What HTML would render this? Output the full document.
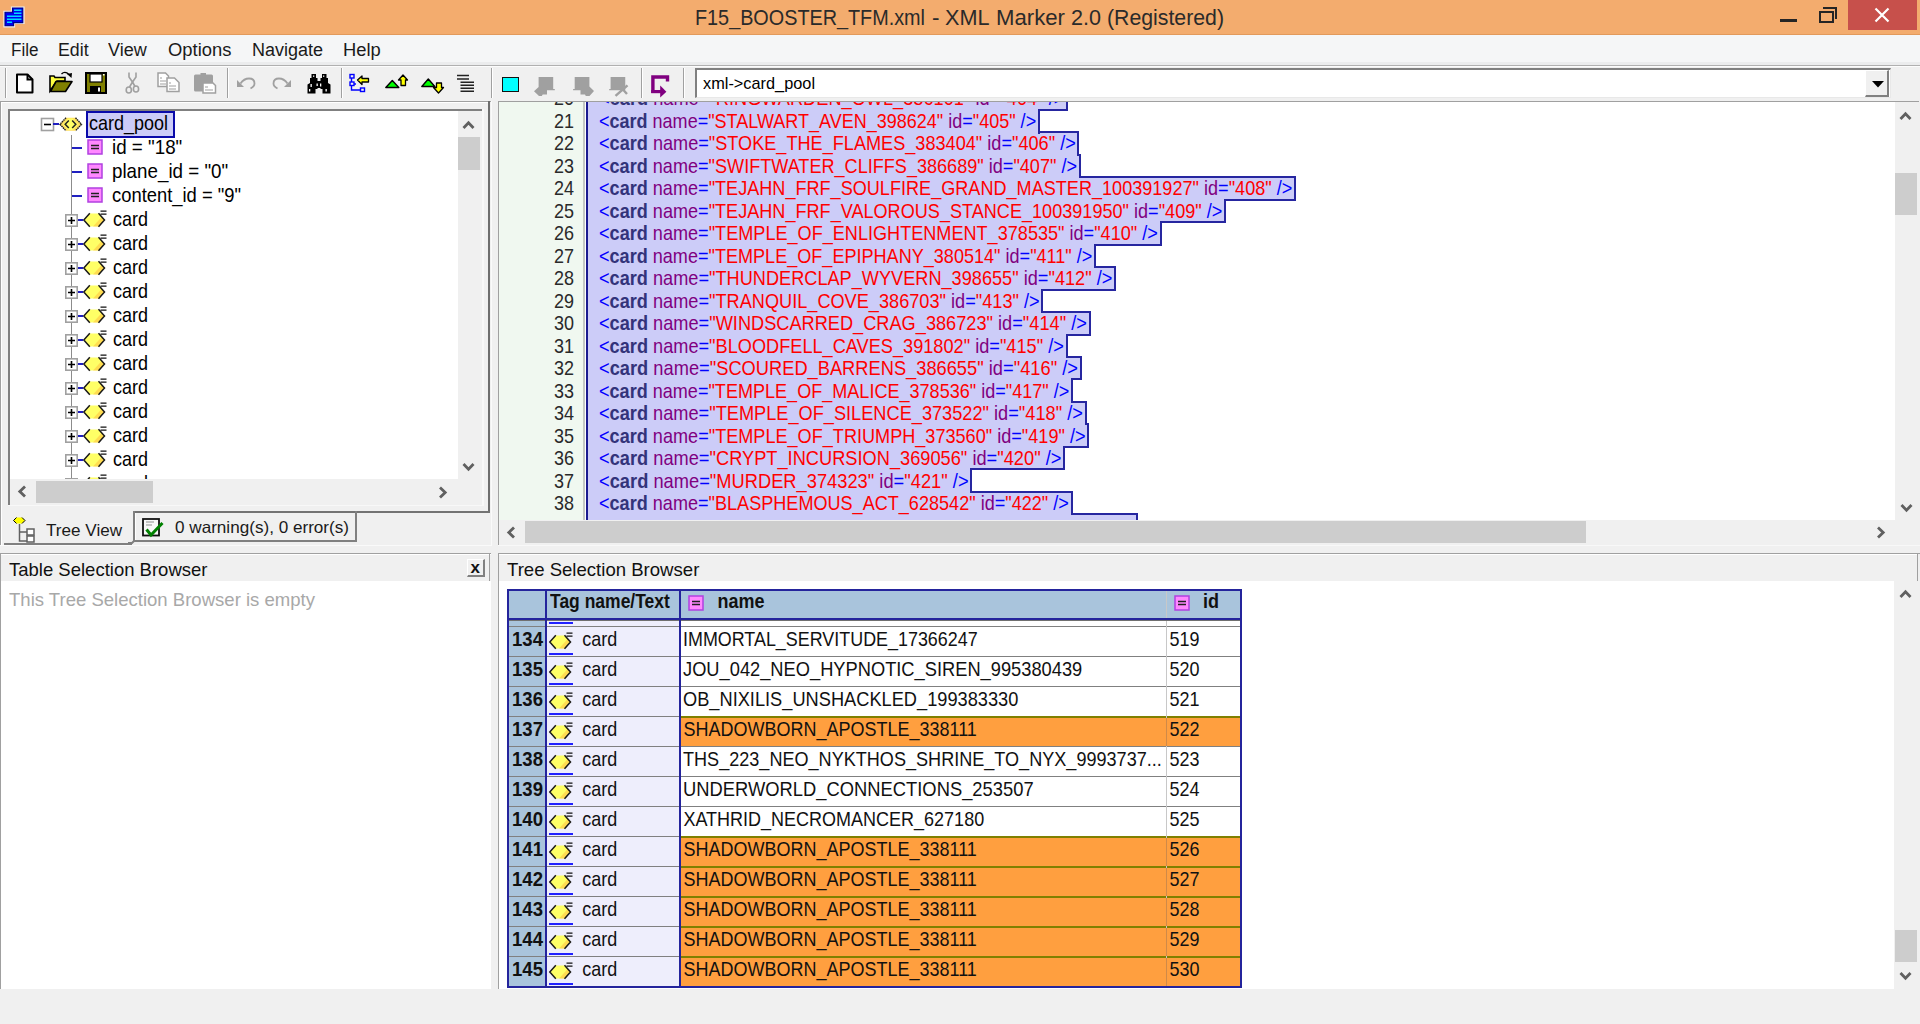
<!DOCTYPE html><html><head><meta charset="utf-8"><title>XML Marker</title><style>
*{margin:0;padding:0;box-sizing:border-box}
html,body{width:1920px;height:1024px;overflow:hidden;background:#F0F0F0;font-family:"Liberation Sans", sans-serif;}
.a{position:absolute}
.t{position:absolute;white-space:pre;line-height:1}
svg{position:absolute;overflow:visible}
</style></head><body>
<div class="a" style="left:0px;top:0px;width:1920px;height:34px;background:#F3AC6E;"></div>
<div class="a" style="left:0px;top:34px;width:1920px;height:1px;background:#E29A5C;"></div>
<svg style="left:0;top:0" width="30" height="30" viewBox="0 0 30 30"><path d="M12 7.5 H23.5 V23 H14 V26.5 H4.5 V11.8 H12 Z" fill="#0000E8" stroke="#F0F0F0" stroke-width="2.2" stroke-linejoin="miter"/><path d="M12.5 8 H22.8 V22.6 H13.6 V25.8 H5 V12.3 H12.5 Z" fill="#0000F0" stroke="#000080" stroke-width="1.1"/><g stroke="#00DCFF" stroke-width="1.6"><path d="M14 10.3 H21.4 M14 13.2 H21.4 M7 16.2 H21.4 M7 19.2 H21.4 M7 22.2 H12"/></g></svg>
<div class="t" style="left:695.00px;top:7.18px;font-size:22px;color:#2A2A2A;transform:scale(0.9003,1.0000);transform-origin:0 18.62px;">F15_BOOSTER_TFM.xml</div>
<div class="t" style="left:932.00px;top:7.18px;font-size:22px;color:#2A2A2A;transform:scale(1.0237,1.0000);transform-origin:0 18.62px;">-</div>
<div class="t" style="left:945.00px;top:7.18px;font-size:22px;color:#2A2A2A;transform:scale(0.9837,1.0000);transform-origin:0 18.62px;">XML</div>
<div class="t" style="left:996.00px;top:7.18px;font-size:22px;color:#2A2A2A;transform:scale(1.0080,1.0000);transform-origin:0 18.62px;">Marker</div>
<div class="t" style="left:1071.00px;top:7.18px;font-size:22px;color:#2A2A2A;transform:scale(0.9809,1.0000);transform-origin:0 18.62px;">2.0</div>
<div class="t" style="left:1106.50px;top:7.18px;font-size:22px;color:#2A2A2A;transform:scale(0.9666,1.0000);transform-origin:0 18.62px;">(Registered)</div>
<div class="a" style="left:1780px;top:19px;width:17px;height:3px;background:#252525;"></div>
<div class="a" style="left:1819px;top:11px;width:15px;height:12px;border:2px solid #252525"></div>
<div class="a" style="left:1823px;top:7px;width:14px;height:12px;border-top:2px solid #252525;border-right:2px solid #252525"></div>
<div class="a" style="left:1848px;top:0px;width:69px;height:30px;background:#C7504B;"></div>
<svg style="left:1874px;top:8px" width="16" height="14" viewBox="0 0 16 14"><path d="M1.5 0.5 L14.5 13.5 M14.5 0.5 L1.5 13.5" stroke="#fff" stroke-width="2.2"/></svg>
<div class="a" style="left:0px;top:35px;width:1920px;height:30px;background:#F5F6F7;"></div>
<div class="a" style="left:0px;top:62px;width:1920px;height:3px;background:#EBECED;"></div>
<div class="t" style="left:10.50px;top:40.56px;font-size:18px;color:#1A1A1A;transform:scale(0.9481,1.0000);transform-origin:0 15.24px;">File</div>
<div class="t" style="left:58.40px;top:40.56px;font-size:18px;color:#1A1A1A;transform:scale(0.9866,1.0000);transform-origin:0 15.24px;">Edit</div>
<div class="t" style="left:108.40px;top:40.56px;font-size:18px;color:#1A1A1A;transform:scale(1.0022,1.0000);transform-origin:0 15.24px;">View</div>
<div class="t" style="left:167.75px;top:40.56px;font-size:18px;color:#1A1A1A;transform:scale(1.0212,1.0000);transform-origin:0 15.24px;">Options</div>
<div class="t" style="left:252.00px;top:40.56px;font-size:18px;color:#1A1A1A;">Navigate</div>
<div class="t" style="left:342.75px;top:40.56px;font-size:18px;color:#1A1A1A;transform:scale(1.0197,1.0000);transform-origin:0 15.24px;">Help</div>
<div class="a" style="left:0px;top:65px;width:1920px;height:36px;background:#F0F0F0;"></div>
<div class="a" style="left:0px;top:65px;width:1920px;height:1px;background:#B0B0B0;"></div>
<div class="a" style="left:0px;top:66px;width:1920px;height:1px;background:#FCFCFC;"></div>
<div class="a" style="left:0px;top:100px;width:1920px;height:1px;background:#F0F0F0;"></div>
<div class="a" style="left:5px;top:68px;width:1px;height:30px;background:#A0A0A0;"></div>
<div class="a" style="left:6px;top:68px;width:1px;height:30px;background:#FFFFFF;"></div>
<div class="a" style="left:227px;top:68px;width:1px;height:30px;background:#A0A0A0;"></div>
<div class="a" style="left:228px;top:68px;width:1px;height:30px;background:#FFFFFF;"></div>
<div class="a" style="left:341px;top:68px;width:1px;height:30px;background:#A0A0A0;"></div>
<div class="a" style="left:342px;top:68px;width:1px;height:30px;background:#FFFFFF;"></div>
<div class="a" style="left:491px;top:68px;width:1px;height:30px;background:#A0A0A0;"></div>
<div class="a" style="left:492px;top:68px;width:1px;height:30px;background:#FFFFFF;"></div>
<div class="a" style="left:641px;top:68px;width:1px;height:30px;background:#A0A0A0;"></div>
<div class="a" style="left:642px;top:68px;width:1px;height:30px;background:#FFFFFF;"></div>
<div class="a" style="left:683px;top:68px;width:1px;height:30px;background:#A0A0A0;"></div>
<div class="a" style="left:684px;top:68px;width:1px;height:30px;background:#FFFFFF;"></div>
<svg style="left:16px;top:73px" width="18" height="21" viewBox="0 0 18 21"><path d="M1 1.5 H11.5 L16.5 6.5 V19.5 H1 Z" fill="#fff" stroke="#000" stroke-width="2" stroke-linejoin="round"/><path d="M11.5 1.5 V6.5 H16.5" fill="none" stroke="#000" stroke-width="2"/></svg>
<svg style="left:49px;top:71px" width="24" height="22" viewBox="0 0 24 22"><path d="M1 5 H5 L6 6.5 H16 V10 H8 L1 20 Z" fill="#FFFF40" stroke="#000" stroke-width="1.6"/><path d="M1.5 20.5 L7 10.5 H23 L16.5 20.5 Z" fill="#808000" stroke="#000" stroke-width="1.6" stroke-linejoin="round"/><path d="M12.5 3 Q16 -0.5 20 3.5" fill="none" stroke="#000" stroke-width="1.4"/><path d="M18 3 L23 2 L22.5 7 Z" fill="#000"/></svg>
<svg style="left:85px;top:72px" width="22" height="22" viewBox="0 0 22 22"><rect x="1" y="1" width="20" height="20" fill="#808000" stroke="#000" stroke-width="2"/><rect x="5" y="2" width="12" height="8" fill="#fff" stroke="#000" stroke-width="1.2"/><rect x="5" y="14" width="11" height="7" fill="#000"/><rect x="13" y="15.5" width="2" height="4" fill="#fff"/><rect x="18" y="2" width="1.5" height="1.5" fill="#fff"/></svg>
<svg style="left:125px;top:72px" width="16" height="22" viewBox="0 0 16 22"><path d="M4 0.5 V5 L7.5 10 L11 5 V0.5" fill="none" stroke="#A0A0A0" stroke-width="1.6"/><path d="M7.5 10 L4.5 15 M7.5 10 L10 14.5" fill="none" stroke="#A0A0A0" stroke-width="1.6"/><ellipse cx="3.8" cy="18" rx="2.6" ry="3" fill="none" stroke="#A0A0A0" stroke-width="1.6"/><ellipse cx="11" cy="17" rx="2.6" ry="3" fill="none" stroke="#A0A0A0" stroke-width="1.6"/></svg>
<svg style="left:157px;top:72px" width="24" height="21" viewBox="0 0 24 21"><path d="M1 1 H8.5 L11.5 4 V14.5 H1 Z" fill="#fff" stroke="#A0A0A0" stroke-width="1.5"/><path d="M3 6 H5 M3 9 H9 M3 12 H9" stroke="#A0A0A0" stroke-width="1.2"/><path d="M10 6 H17.5 L22 10.5 V19.5 H10 Z" fill="#fff" stroke="#A0A0A0" stroke-width="1.5"/><path d="M12 11 H14 M12 14 H19 M12 17 H19" stroke="#A0A0A0" stroke-width="1.2"/></svg>
<svg style="left:193px;top:72px" width="24" height="22" viewBox="0 0 24 22"><path d="M1 4 Q1 2.5 2.5 2.5 H7.5 V1 H13 V2.5 H18.5 Q20 2.5 20 4 V18 Q20 19.5 18.5 19.5 H2.5 Q1 19.5 1 18 Z" fill="#A0A0A0"/><path d="M10 11 H20 L22.5 13.5 V21 H10 Z" fill="#fff" stroke="#A0A0A0" stroke-width="1.5"/><path d="M12 15 H15 M12 18 H20" stroke="#A0A0A0" stroke-width="1.2"/></svg>
<svg style="left:236px;top:77px" width="20" height="13" viewBox="0 0 20 13"><path d="M1 3 V10 H8 Z" fill="#A0A0A0"/><path d="M4.5 6.5 Q8 1.5 13 1.5 Q18.5 1.5 18.5 6.5 Q18.5 9.5 14.5 11.5" fill="none" stroke="#A0A0A0" stroke-width="1.8"/></svg>
<svg style="left:272px;top:77px" width="20" height="13" viewBox="0 0 20 13"><path d="M19 3 V10 H12 Z" fill="#A0A0A0"/><path d="M15.5 6.5 Q12 1.5 7 1.5 Q1.5 1.5 1.5 6.5 Q1.5 9.5 5.5 11.5" fill="none" stroke="#A0A0A0" stroke-width="1.8"/></svg>
<svg style="left:307px;top:74px" width="24" height="20" viewBox="0 0 24 20"><path d="M4.5 0 H9 V4 H10.5 V7 H13.5 V4 H15 V0 H19.5 V4 H21 V9 L23.5 10.5 V19.5 H15.5 V15 H13.5 V14 H10.5 V15 H8.5 V19.5 H0.5 V10.5 L3 9 V4 H4.5 Z" fill="#000"/><rect x="6" y="1.5" width="1.3" height="1.3" fill="#fff"/><rect x="16" y="1.5" width="1.3" height="1.3" fill="#fff"/><rect x="3.5" y="10" width="1.3" height="3" fill="#fff"/><rect x="9.5" y="9.5" width="1.3" height="2.5" fill="#fff"/><rect x="13" y="9.5" width="1.3" height="3" fill="#fff"/><rect x="2" y="15" width="1.3" height="2.5" fill="#fff"/><rect x="18.5" y="15" width="1.3" height="2.5" fill="#fff"/></svg>
<svg style="left:348px;top:73px" width="23" height="20" viewBox="0 0 23 20"><g fill="none" stroke="#0000FF" stroke-width="1.4"><rect x="2" y="1.5" width="4" height="3.5"/><rect x="2" y="9" width="4" height="3.5"/><rect x="12.5" y="15" width="4" height="3.5"/><path d="M3.5 5 V9 M3.5 12.5 V17 H12.5 M6 11 H8"/></g><path d="M9.5 7 L14 3 V5.5 H20.5 V9 H14 V11.5 Z" fill="#FFFF00" stroke="#000" stroke-width="1.3" stroke-linejoin="round"/></svg>
<svg style="left:385px;top:74px" width="25" height="15" viewBox="0 0 25 15"><path d="M0.8 13.5 L7.3 6.5 L13.8 13.5 Z" fill="#00FF00" stroke="#000" stroke-width="1.4" stroke-linejoin="round"/><path d="M18 1 L22.5 6 H20.5 V11.5 H16 V6 H13.5 Z" fill="#FFFF00" stroke="#000" stroke-width="1.3" stroke-linejoin="round"/></svg>
<svg style="left:421px;top:77px" width="25" height="17" viewBox="0 0 25 17"><path d="M0.8 9.5 L7.3 2 L13.8 9.5 Z" fill="#00FF00" stroke="#000" stroke-width="1.4" stroke-linejoin="round"/><path d="M17.5 16 L22.5 10.5 H20.5 V6 H15.5 V10.5 H12.5 Z" fill="#FFFF00" stroke="#000" stroke-width="1.3" stroke-linejoin="round"/></svg>
<svg style="left:456px;top:74px" width="19" height="19" viewBox="0 0 19 19"><g stroke="#222" stroke-width="1.6"><path d="M1 1.5 H13 M1 5 H13 M4.5 8.2 H18 M4.5 11.2 H18 M4.5 14.2 H18 M4.5 17.2 H18"/></g></svg>
<div class="a" style="left:502px;top:77px;width:17px;height:15px;background:#00FFFF;border:1.5px solid #111"></div>
<svg style="left:534px;top:77px" width="22" height="20" viewBox="0 0 22 20"><path d="M4.6 0 H19.2 V12.1 H20.8 V13.2 H13 V17.6 H8.7 L7.8 19 H5 L0 14.3 L4.6 9.9 Z" fill="#A0A0A0"/></svg>
<svg style="left:573px;top:77px" width="22" height="20" viewBox="0 0 22 20"><path d="M1.7 0 H16.4 V9.5 L21 14 L16.5 19 H12.8 L12 17.6 H7.5 V13.2 H0.1 V12.1 H1.7 Z" fill="#A0A0A0"/></svg>
<svg style="left:609px;top:77px" width="22" height="20" viewBox="0 0 22 20"><path d="M1.6 0 H16.25 V13.2 H0.2 V12 H1.6 Z" fill="#A0A0A0"/><path d="M6.5 18.8 L18.5 8.3 M13.5 12 L18 17" stroke="#A0A0A0" stroke-width="2.4"/></svg>
<svg style="left:650px;top:74px" width="22" height="24" viewBox="0 0 22 24"><path d="M2.9 19 V3 H17.5 V7.5" fill="none" stroke="#800080" stroke-width="3.4" stroke-linejoin="miter"/><path d="M1.2 17.6 H12" stroke="#800080" stroke-width="3.2"/><path d="M10.2 11.5 L16.4 17.7 L10.2 23.5 Z" fill="#800080"/></svg>
<div class="a" style="left:695px;top:68px;width:1196px;height:30px;background:#fff;border-top:2px solid #808080;border-left:2px solid #808080;border-right:1px solid #E8E8E8;border-bottom:1px solid #E8E8E8"></div>
<div class="a" style="left:1865px;top:70px;width:24px;height:27px;background:#F0F0F0;border-right:2px solid #808080;border-bottom:2px solid #808080;border-top:1px solid #fff;border-left:1px solid #fff"></div>
<svg style="left:1871.5px;top:81px" width="12" height="7" viewBox="0 0 12 7"><path d="M0 0 H12 L6 6.5 Z" fill="#000"/></svg>
<div class="t" style="left:703.00px;top:75.21px;font-size:17px;color:#000;transform:scale(0.9598,1.0000);transform-origin:0 14.39px;">xml-&gt;card_pool</div>
<div class="a" style="left:0px;top:101px;width:491px;height:1px;background:#A0A0A0;"></div>
<div class="a" style="left:0px;top:101px;width:1px;height:444px;background:#A0A0A0;"></div>
<div class="a" style="left:1px;top:102px;width:489px;height:1px;background:#FFFFFF;"></div>
<div class="a" style="left:1px;top:102px;width:1px;height:443px;background:#FFFFFF;"></div>
<div class="a" style="left:488px;top:101px;width:2px;height:412px;background:#6E6E6E;"></div>
<div class="a" style="left:8px;top:109px;width:476px;height:2px;background:#808080;"></div>
<div class="a" style="left:8px;top:109px;width:2px;height:397px;background:#808080;"></div>
<div class="a" style="left:10px;top:111px;width:472px;height:394px;background:#FFFFFF;"></div>
<div class="a" style="left:482px;top:109px;width:2px;height:397px;background:#F8F8F8;"></div>
<div class="a" style="left:8px;top:505px;width:476px;height:1px;background:#F8F8F8;"></div>
<div class="a" style="left:458px;top:111px;width:24px;height:369px;background:#F0F0F0;"></div>
<div class="a" style="left:458px;top:137px;width:22px;height:33px;background:#CDCDCD;"></div>
<svg style="left:461.2px;top:117.5px" width="15" height="15" viewBox="0 0 15 15"><path d="M2.5 10 L7.5 4.8 L12.5 10" fill="none" stroke="#606060" stroke-width="2.8" stroke-linejoin="miter"/></svg>
<svg style="left:461.2px;top:458.5px" width="15" height="15" viewBox="0 0 15 15"><path d="M2.5 5 L7.5 10.2 L12.5 5" fill="none" stroke="#606060" stroke-width="2.8" stroke-linejoin="miter"/></svg>
<div class="a" style="left:10px;top:479px;width:472px;height:26px;background:#F0F0F0;"></div>
<div class="a" style="left:36px;top:481px;width:117px;height:22px;background:#CDCDCD;"></div>
<svg style="left:15.0px;top:484.0px" width="15" height="15" viewBox="0 0 15 15"><path d="M10 2.5 L4.8 7.5 L10 12.5" fill="none" stroke="#606060" stroke-width="2.8" stroke-linejoin="miter"/></svg>
<svg style="left:435.2px;top:484.5px" width="15" height="15" viewBox="0 0 15 15"><path d="M5 2.5 L10.2 7.5 L5 12.5" fill="none" stroke="#606060" stroke-width="2.8" stroke-linejoin="miter"/></svg>
<div class="a" style="left:458px;top:481px;width:24px;height:24px;background:#F0F0F0;"></div>
<div class="a" style="left:10px;top:111px;width:448px;height:368px;overflow:hidden">
<svg style="left:31px;top:7px" width="14" height="14" viewBox="0 0 14 14"><rect x="0.5" y="0.5" width="12" height="12" fill="#fff" stroke="#A0A0A0" stroke-width="1.6"/><path d="M3 6.5 H10" stroke="#000" stroke-width="1.6"/></svg>
<div class="a" style="left:43px;top:12px;width:6px;height:2px;background:#2020C0;"></div>
<svg style="left:49px;top:5px" width="24" height="16" viewBox="0 0 24 16"><path d="M1 8.3 L7 1.8 H16.5 L22.5 8.3 L16.5 14.8 H7 Z" fill="#FFE060"/><path d="M9.5 2.5 L4 8.3 L9.5 14 H13.5 L19 8.3 L13.5 2.5 Z" fill="#FFFF66"/><path d="M7 1.8 L1 8.3 L7 14.8 M16.5 1.8 L22.5 8.3 L16.5 14.8" fill="none" stroke="#222" stroke-width="1.4" stroke-dasharray="1.6 0.6"/><path d="M9.8 4.5 L6.2 8.3 L9.8 12.1 M13.2 4.5 L16.8 8.3 L13.2 12.1" fill="none" stroke="#222" stroke-width="1.5"/></svg>
<div class="a" style="left:76px;top:0px;width:89px;height:27px;background:#CCCCF8;"></div>
<div class="a" style="left:76px;top:0px;width:89px;height:27px;border:2px solid #0A0AAA"></div>
<div class="t" style="left:79.00px;top:3.96px;font-size:18px;color:#000;transform:scale(1.0000,1.1000);transform-origin:0 15.24px;">card_pool</div>
<div class="a" style="left:61px;top:24px;width:1px;height:346px;background:#8C8C8C;"></div>
<div class="a" style="left:62px;top:36px;width:10px;height:2px;background:#2020C0;"></div>
<svg style="left:77px;top:28px" width="16" height="16" viewBox="0 0 16 16"><rect x="1" y="1" width="14" height="14" fill="#FF88FF" stroke="#B040E0" stroke-width="1.5"/><path d="M4 6.5 H12 M4 9.5 H12" stroke="#222" stroke-width="1.5"/></svg>
<div class="t" style="left:101.60px;top:28.16px;font-size:18px;color:#000;transform:scale(1.0440,1.1000);transform-origin:0 15.24px;">id = "18"</div>
<div class="a" style="left:62px;top:60px;width:10px;height:2px;background:#2020C0;"></div>
<svg style="left:77px;top:52px" width="16" height="16" viewBox="0 0 16 16"><rect x="1" y="1" width="14" height="14" fill="#FF88FF" stroke="#B040E0" stroke-width="1.5"/><path d="M4 6.5 H12 M4 9.5 H12" stroke="#222" stroke-width="1.5"/></svg>
<div class="t" style="left:102.00px;top:52.16px;font-size:18px;color:#000;transform:scale(1.0430,1.1000);transform-origin:0 15.24px;">plane_id = "0"</div>
<div class="a" style="left:62px;top:84px;width:10px;height:2px;background:#2020C0;"></div>
<svg style="left:77px;top:76px" width="16" height="16" viewBox="0 0 16 16"><rect x="1" y="1" width="14" height="14" fill="#FF88FF" stroke="#B040E0" stroke-width="1.5"/><path d="M4 6.5 H12 M4 9.5 H12" stroke="#222" stroke-width="1.5"/></svg>
<div class="t" style="left:102.40px;top:76.16px;font-size:18px;color:#000;transform:scale(1.0210,1.1000);transform-origin:0 15.24px;">content_id = "9"</div>
<svg style="left:55px;top:103px" width="13" height="13" viewBox="0 0 13 13"><rect x="0.8" y="0.8" width="11.4" height="11.4" fill="#fff" stroke="#A0A0A0" stroke-width="1.6"/><path d="M3 6.5 H10 M6.5 3 V10" stroke="#000" stroke-width="1.6"/></svg>
<div class="a" style="left:68px;top:108px;width:5px;height:2px;background:#2020C0;"></div>
<svg style="left:73.20px;top:98.10px" width="24" height="20" viewBox="0 0 24 20"><path d="M0.6 11 L6.5 4.5 H15.8 L21.8 11 L15.8 17.5 H6.5 Z" fill="#FFFF66"/><path d="M10 17.5 L15.5 11.5 L19 7.7 L21.8 11 L15.8 17.5 Z" fill="#FFC040" opacity="0.55"/><path d="M6.8 4.3 L0.8 11 L6.8 17.7 M15.5 4.3 L21.5 11 L15.5 17.7" fill="none" stroke="#1A1A1A" stroke-width="1.5"/><path d="M17.5 2.1 H23.5 M17.5 5.1 H23.5" stroke="#111" stroke-width="1.4"/></svg>
<div class="t" style="left:103.00px;top:100.16px;font-size:18px;color:#000;transform:scale(1.0000,1.1000);transform-origin:0 15.24px;">card</div>
<svg style="left:55px;top:127px" width="13" height="13" viewBox="0 0 13 13"><rect x="0.8" y="0.8" width="11.4" height="11.4" fill="#fff" stroke="#A0A0A0" stroke-width="1.6"/><path d="M3 6.5 H10 M6.5 3 V10" stroke="#000" stroke-width="1.6"/></svg>
<div class="a" style="left:68px;top:132px;width:5px;height:2px;background:#2020C0;"></div>
<svg style="left:73.20px;top:122.10px" width="24" height="20" viewBox="0 0 24 20"><path d="M0.6 11 L6.5 4.5 H15.8 L21.8 11 L15.8 17.5 H6.5 Z" fill="#FFFF66"/><path d="M10 17.5 L15.5 11.5 L19 7.7 L21.8 11 L15.8 17.5 Z" fill="#FFC040" opacity="0.55"/><path d="M6.8 4.3 L0.8 11 L6.8 17.7 M15.5 4.3 L21.5 11 L15.5 17.7" fill="none" stroke="#1A1A1A" stroke-width="1.5"/><path d="M17.5 2.1 H23.5 M17.5 5.1 H23.5" stroke="#111" stroke-width="1.4"/></svg>
<div class="t" style="left:103.00px;top:124.16px;font-size:18px;color:#000;transform:scale(1.0000,1.1000);transform-origin:0 15.24px;">card</div>
<svg style="left:55px;top:151px" width="13" height="13" viewBox="0 0 13 13"><rect x="0.8" y="0.8" width="11.4" height="11.4" fill="#fff" stroke="#A0A0A0" stroke-width="1.6"/><path d="M3 6.5 H10 M6.5 3 V10" stroke="#000" stroke-width="1.6"/></svg>
<div class="a" style="left:68px;top:156px;width:5px;height:2px;background:#2020C0;"></div>
<svg style="left:73.20px;top:146.10px" width="24" height="20" viewBox="0 0 24 20"><path d="M0.6 11 L6.5 4.5 H15.8 L21.8 11 L15.8 17.5 H6.5 Z" fill="#FFFF66"/><path d="M10 17.5 L15.5 11.5 L19 7.7 L21.8 11 L15.8 17.5 Z" fill="#FFC040" opacity="0.55"/><path d="M6.8 4.3 L0.8 11 L6.8 17.7 M15.5 4.3 L21.5 11 L15.5 17.7" fill="none" stroke="#1A1A1A" stroke-width="1.5"/><path d="M17.5 2.1 H23.5 M17.5 5.1 H23.5" stroke="#111" stroke-width="1.4"/></svg>
<div class="t" style="left:103.00px;top:148.16px;font-size:18px;color:#000;transform:scale(1.0000,1.1000);transform-origin:0 15.24px;">card</div>
<svg style="left:55px;top:175px" width="13" height="13" viewBox="0 0 13 13"><rect x="0.8" y="0.8" width="11.4" height="11.4" fill="#fff" stroke="#A0A0A0" stroke-width="1.6"/><path d="M3 6.5 H10 M6.5 3 V10" stroke="#000" stroke-width="1.6"/></svg>
<div class="a" style="left:68px;top:180px;width:5px;height:2px;background:#2020C0;"></div>
<svg style="left:73.20px;top:170.10px" width="24" height="20" viewBox="0 0 24 20"><path d="M0.6 11 L6.5 4.5 H15.8 L21.8 11 L15.8 17.5 H6.5 Z" fill="#FFFF66"/><path d="M10 17.5 L15.5 11.5 L19 7.7 L21.8 11 L15.8 17.5 Z" fill="#FFC040" opacity="0.55"/><path d="M6.8 4.3 L0.8 11 L6.8 17.7 M15.5 4.3 L21.5 11 L15.5 17.7" fill="none" stroke="#1A1A1A" stroke-width="1.5"/><path d="M17.5 2.1 H23.5 M17.5 5.1 H23.5" stroke="#111" stroke-width="1.4"/></svg>
<div class="t" style="left:103.00px;top:172.16px;font-size:18px;color:#000;transform:scale(1.0000,1.1000);transform-origin:0 15.24px;">card</div>
<svg style="left:55px;top:199px" width="13" height="13" viewBox="0 0 13 13"><rect x="0.8" y="0.8" width="11.4" height="11.4" fill="#fff" stroke="#A0A0A0" stroke-width="1.6"/><path d="M3 6.5 H10 M6.5 3 V10" stroke="#000" stroke-width="1.6"/></svg>
<div class="a" style="left:68px;top:204px;width:5px;height:2px;background:#2020C0;"></div>
<svg style="left:73.20px;top:194.10px" width="24" height="20" viewBox="0 0 24 20"><path d="M0.6 11 L6.5 4.5 H15.8 L21.8 11 L15.8 17.5 H6.5 Z" fill="#FFFF66"/><path d="M10 17.5 L15.5 11.5 L19 7.7 L21.8 11 L15.8 17.5 Z" fill="#FFC040" opacity="0.55"/><path d="M6.8 4.3 L0.8 11 L6.8 17.7 M15.5 4.3 L21.5 11 L15.5 17.7" fill="none" stroke="#1A1A1A" stroke-width="1.5"/><path d="M17.5 2.1 H23.5 M17.5 5.1 H23.5" stroke="#111" stroke-width="1.4"/></svg>
<div class="t" style="left:103.00px;top:196.16px;font-size:18px;color:#000;transform:scale(1.0000,1.1000);transform-origin:0 15.24px;">card</div>
<svg style="left:55px;top:223px" width="13" height="13" viewBox="0 0 13 13"><rect x="0.8" y="0.8" width="11.4" height="11.4" fill="#fff" stroke="#A0A0A0" stroke-width="1.6"/><path d="M3 6.5 H10 M6.5 3 V10" stroke="#000" stroke-width="1.6"/></svg>
<div class="a" style="left:68px;top:228px;width:5px;height:2px;background:#2020C0;"></div>
<svg style="left:73.20px;top:218.10px" width="24" height="20" viewBox="0 0 24 20"><path d="M0.6 11 L6.5 4.5 H15.8 L21.8 11 L15.8 17.5 H6.5 Z" fill="#FFFF66"/><path d="M10 17.5 L15.5 11.5 L19 7.7 L21.8 11 L15.8 17.5 Z" fill="#FFC040" opacity="0.55"/><path d="M6.8 4.3 L0.8 11 L6.8 17.7 M15.5 4.3 L21.5 11 L15.5 17.7" fill="none" stroke="#1A1A1A" stroke-width="1.5"/><path d="M17.5 2.1 H23.5 M17.5 5.1 H23.5" stroke="#111" stroke-width="1.4"/></svg>
<div class="t" style="left:103.00px;top:220.16px;font-size:18px;color:#000;transform:scale(1.0000,1.1000);transform-origin:0 15.24px;">card</div>
<svg style="left:55px;top:247px" width="13" height="13" viewBox="0 0 13 13"><rect x="0.8" y="0.8" width="11.4" height="11.4" fill="#fff" stroke="#A0A0A0" stroke-width="1.6"/><path d="M3 6.5 H10 M6.5 3 V10" stroke="#000" stroke-width="1.6"/></svg>
<div class="a" style="left:68px;top:252px;width:5px;height:2px;background:#2020C0;"></div>
<svg style="left:73.20px;top:242.10px" width="24" height="20" viewBox="0 0 24 20"><path d="M0.6 11 L6.5 4.5 H15.8 L21.8 11 L15.8 17.5 H6.5 Z" fill="#FFFF66"/><path d="M10 17.5 L15.5 11.5 L19 7.7 L21.8 11 L15.8 17.5 Z" fill="#FFC040" opacity="0.55"/><path d="M6.8 4.3 L0.8 11 L6.8 17.7 M15.5 4.3 L21.5 11 L15.5 17.7" fill="none" stroke="#1A1A1A" stroke-width="1.5"/><path d="M17.5 2.1 H23.5 M17.5 5.1 H23.5" stroke="#111" stroke-width="1.4"/></svg>
<div class="t" style="left:103.00px;top:244.16px;font-size:18px;color:#000;transform:scale(1.0000,1.1000);transform-origin:0 15.24px;">card</div>
<svg style="left:55px;top:271px" width="13" height="13" viewBox="0 0 13 13"><rect x="0.8" y="0.8" width="11.4" height="11.4" fill="#fff" stroke="#A0A0A0" stroke-width="1.6"/><path d="M3 6.5 H10 M6.5 3 V10" stroke="#000" stroke-width="1.6"/></svg>
<div class="a" style="left:68px;top:276px;width:5px;height:2px;background:#2020C0;"></div>
<svg style="left:73.20px;top:266.10px" width="24" height="20" viewBox="0 0 24 20"><path d="M0.6 11 L6.5 4.5 H15.8 L21.8 11 L15.8 17.5 H6.5 Z" fill="#FFFF66"/><path d="M10 17.5 L15.5 11.5 L19 7.7 L21.8 11 L15.8 17.5 Z" fill="#FFC040" opacity="0.55"/><path d="M6.8 4.3 L0.8 11 L6.8 17.7 M15.5 4.3 L21.5 11 L15.5 17.7" fill="none" stroke="#1A1A1A" stroke-width="1.5"/><path d="M17.5 2.1 H23.5 M17.5 5.1 H23.5" stroke="#111" stroke-width="1.4"/></svg>
<div class="t" style="left:103.00px;top:268.16px;font-size:18px;color:#000;transform:scale(1.0000,1.1000);transform-origin:0 15.24px;">card</div>
<svg style="left:55px;top:295px" width="13" height="13" viewBox="0 0 13 13"><rect x="0.8" y="0.8" width="11.4" height="11.4" fill="#fff" stroke="#A0A0A0" stroke-width="1.6"/><path d="M3 6.5 H10 M6.5 3 V10" stroke="#000" stroke-width="1.6"/></svg>
<div class="a" style="left:68px;top:300px;width:5px;height:2px;background:#2020C0;"></div>
<svg style="left:73.20px;top:290.10px" width="24" height="20" viewBox="0 0 24 20"><path d="M0.6 11 L6.5 4.5 H15.8 L21.8 11 L15.8 17.5 H6.5 Z" fill="#FFFF66"/><path d="M10 17.5 L15.5 11.5 L19 7.7 L21.8 11 L15.8 17.5 Z" fill="#FFC040" opacity="0.55"/><path d="M6.8 4.3 L0.8 11 L6.8 17.7 M15.5 4.3 L21.5 11 L15.5 17.7" fill="none" stroke="#1A1A1A" stroke-width="1.5"/><path d="M17.5 2.1 H23.5 M17.5 5.1 H23.5" stroke="#111" stroke-width="1.4"/></svg>
<div class="t" style="left:103.00px;top:292.16px;font-size:18px;color:#000;transform:scale(1.0000,1.1000);transform-origin:0 15.24px;">card</div>
<svg style="left:55px;top:319px" width="13" height="13" viewBox="0 0 13 13"><rect x="0.8" y="0.8" width="11.4" height="11.4" fill="#fff" stroke="#A0A0A0" stroke-width="1.6"/><path d="M3 6.5 H10 M6.5 3 V10" stroke="#000" stroke-width="1.6"/></svg>
<div class="a" style="left:68px;top:324px;width:5px;height:2px;background:#2020C0;"></div>
<svg style="left:73.20px;top:314.10px" width="24" height="20" viewBox="0 0 24 20"><path d="M0.6 11 L6.5 4.5 H15.8 L21.8 11 L15.8 17.5 H6.5 Z" fill="#FFFF66"/><path d="M10 17.5 L15.5 11.5 L19 7.7 L21.8 11 L15.8 17.5 Z" fill="#FFC040" opacity="0.55"/><path d="M6.8 4.3 L0.8 11 L6.8 17.7 M15.5 4.3 L21.5 11 L15.5 17.7" fill="none" stroke="#1A1A1A" stroke-width="1.5"/><path d="M17.5 2.1 H23.5 M17.5 5.1 H23.5" stroke="#111" stroke-width="1.4"/></svg>
<div class="t" style="left:103.00px;top:316.16px;font-size:18px;color:#000;transform:scale(1.0000,1.1000);transform-origin:0 15.24px;">card</div>
<svg style="left:55px;top:343px" width="13" height="13" viewBox="0 0 13 13"><rect x="0.8" y="0.8" width="11.4" height="11.4" fill="#fff" stroke="#A0A0A0" stroke-width="1.6"/><path d="M3 6.5 H10 M6.5 3 V10" stroke="#000" stroke-width="1.6"/></svg>
<div class="a" style="left:68px;top:348px;width:5px;height:2px;background:#2020C0;"></div>
<svg style="left:73.20px;top:338.10px" width="24" height="20" viewBox="0 0 24 20"><path d="M0.6 11 L6.5 4.5 H15.8 L21.8 11 L15.8 17.5 H6.5 Z" fill="#FFFF66"/><path d="M10 17.5 L15.5 11.5 L19 7.7 L21.8 11 L15.8 17.5 Z" fill="#FFC040" opacity="0.55"/><path d="M6.8 4.3 L0.8 11 L6.8 17.7 M15.5 4.3 L21.5 11 L15.5 17.7" fill="none" stroke="#1A1A1A" stroke-width="1.5"/><path d="M17.5 2.1 H23.5 M17.5 5.1 H23.5" stroke="#111" stroke-width="1.4"/></svg>
<div class="t" style="left:103.00px;top:340.16px;font-size:18px;color:#000;transform:scale(1.0000,1.1000);transform-origin:0 15.24px;">card</div>
<svg style="left:55px;top:367px" width="13" height="13" viewBox="0 0 13 13"><rect x="0.8" y="0.8" width="11.4" height="11.4" fill="#fff" stroke="#A0A0A0" stroke-width="1.6"/><path d="M3 6.5 H10 M6.5 3 V10" stroke="#000" stroke-width="1.6"/></svg>
<div class="a" style="left:68px;top:372px;width:5px;height:2px;background:#2020C0;"></div>
<svg style="left:73.20px;top:362.10px" width="24" height="20" viewBox="0 0 24 20"><path d="M0.6 11 L6.5 4.5 H15.8 L21.8 11 L15.8 17.5 H6.5 Z" fill="#FFFF66"/><path d="M10 17.5 L15.5 11.5 L19 7.7 L21.8 11 L15.8 17.5 Z" fill="#FFC040" opacity="0.55"/><path d="M6.8 4.3 L0.8 11 L6.8 17.7 M15.5 4.3 L21.5 11 L15.5 17.7" fill="none" stroke="#1A1A1A" stroke-width="1.5"/><path d="M17.5 2.1 H23.5 M17.5 5.1 H23.5" stroke="#111" stroke-width="1.4"/></svg>
<div class="t" style="left:103.00px;top:364.16px;font-size:18px;color:#000;transform:scale(1.0000,1.1000);transform-origin:0 15.24px;">card</div>
</div>
<div class="a" style="left:133px;top:511px;width:357px;height:2px;background:#737373;"></div>
<div class="a" style="left:133px;top:511px;width:2px;height:30px;background:#808080;"></div>
<div class="a" style="left:135px;top:513px;width:1px;height:27px;background:#FFFFFF;"></div>
<div class="a" style="left:355px;top:511px;width:2px;height:30px;background:#808080;"></div>
<div class="a" style="left:133px;top:540px;width:224px;height:2px;background:#808080;"></div>
<div class="a" style="left:4px;top:543px;width:128px;height:2px;background:#808080;"></div>
<svg style="left:128px;top:539px" width="8" height="6" viewBox="0 0 8 6"><path d="M0 4 H4 L7 1" fill="none" stroke="#808080" stroke-width="2"/></svg>
<svg style="left:12px;top:516px" width="26" height="28" viewBox="0 0 26 28"><path d="M1.5 4.5 L4.5 1.5 H10 L13 4.5 L10 7.5 H4.5 Z" fill="#FFFF00"/><path d="M4.5 1.5 L1.5 4.5 L4.5 7.5 M10 1.5 L13 4.5 L10 7.5" fill="none" stroke="#000" stroke-width="1"/><g fill="#fff" stroke="#606060" stroke-width="1.5"><path d="M7.5 8 V25 H15 M7.5 16 H15" fill="none"/><rect x="15" y="13" width="7" height="6"/><rect x="15" y="20" width="7" height="6"/></g></svg>
<div class="t" style="left:46.00px;top:521.53px;font-size:16.5px;color:#1A1A1A;transform:scale(1.0367,1.0000);transform-origin:0 13.97px;">Tree View</div>
<svg style="left:141px;top:517px" width="24" height="22" viewBox="0 0 24 22"><rect x="2" y="2" width="16" height="16.5" fill="#F8F8F8" stroke="#111" stroke-width="1.8"/><path d="M5 5 H13 M5 8 H11" stroke="#909090" stroke-width="1.2"/><path d="M5.5 12.5 L10 18 L21.5 6" fill="none" stroke="#008000" stroke-width="3"/></svg>
<div class="t" style="left:174.50px;top:518.63px;font-size:16.5px;color:#1A1A1A;transform:scale(1.0370,1.0000);transform-origin:0 13.97px;">0 warning(s), 0 error(s)</div>
<div class="a" style="left:498px;top:101px;width:1421px;height:1px;background:#A0A0A0;"></div>
<div class="a" style="left:498px;top:101px;width:1px;height:444px;background:#A0A0A0;"></div>
<div class="a" style="left:499px;top:102px;width:1396px;height:418px;background:#FFFFFF;"></div>
<div class="a" style="left:499px;top:102px;width:84px;height:418px;background:#F0F8F0;"></div>
<div class="a" style="left:583px;top:102px;width:2px;height:418px;background:#C4C8C4;"></div>
<div class="a" style="left:586px;top:102px;width:2px;height:418px;background:#1A1A90;"></div>
<div class="a" style="left:499px;top:102px;width:1396px;height:418px;overflow:hidden">
<div class="a" style="left:89px;top:-14.45px;width:479px;height:22.5px;background:#CCCCF8;"></div>
<div class="a" style="left:89px;top:8.0px;width:450.8px;height:22.5px;background:#CCCCF8;"></div>
<div class="a" style="left:89px;top:30.45px;width:490.4px;height:22.5px;background:#CCCCF8;"></div>
<div class="a" style="left:89px;top:52.9px;width:491.7px;height:22.5px;background:#CCCCF8;"></div>
<div class="a" style="left:89px;top:75.35px;width:707px;height:22.5px;background:#CCCCF8;"></div>
<div class="a" style="left:89px;top:97.8px;width:637px;height:22.5px;background:#CCCCF8;"></div>
<div class="a" style="left:89px;top:120.25px;width:572.5px;height:22.5px;background:#CCCCF8;"></div>
<div class="a" style="left:89px;top:142.7px;width:507px;height:22.5px;background:#CCCCF8;"></div>
<div class="a" style="left:89px;top:165.15px;width:527px;height:22.5px;background:#CCCCF8;"></div>
<div class="a" style="left:89px;top:187.6px;width:454.3px;height:22.5px;background:#CCCCF8;"></div>
<div class="a" style="left:89px;top:210.05px;width:501.5px;height:22.5px;background:#CCCCF8;"></div>
<div class="a" style="left:89px;top:232.5px;width:478.5px;height:22.5px;background:#CCCCF8;"></div>
<div class="a" style="left:89px;top:254.95px;width:492.6px;height:22.5px;background:#CCCCF8;"></div>
<div class="a" style="left:89px;top:277.4px;width:484px;height:22.5px;background:#CCCCF8;"></div>
<div class="a" style="left:89px;top:299.85px;width:497.6px;height:22.5px;background:#CCCCF8;"></div>
<div class="a" style="left:89px;top:322.3px;width:500.2px;height:22.5px;background:#CCCCF8;"></div>
<div class="a" style="left:89px;top:344.75px;width:476.1px;height:22.5px;background:#CCCCF8;"></div>
<div class="a" style="left:89px;top:367.2px;width:383.3px;height:22.5px;background:#CCCCF8;"></div>
<div class="a" style="left:89px;top:389.65px;width:483.5px;height:22.5px;background:#CCCCF8;"></div>
<div class="a" style="left:89px;top:412.1px;width:548.7px;height:22.5px;background:#CCCCF8;"></div>
<div class="a" style="left:567px;top:-15.45px;width:2px;height:24.5px;background:#2626A0;"></div>
<div class="a" style="left:538.8px;top:7.0px;width:30.2px;height:2px;background:#2626A0;"></div>
<div class="a" style="left:538.8px;top:7.0px;width:2px;height:24.5px;background:#2626A0;"></div>
<div class="a" style="left:538.8px;top:29.45px;width:41.6px;height:2px;background:#2626A0;"></div>
<div class="a" style="left:578.4px;top:29.45px;width:2px;height:24.5px;background:#2626A0;"></div>
<div class="a" style="left:578.4px;top:51.9px;width:3.3px;height:2px;background:#2626A0;"></div>
<div class="a" style="left:579.7px;top:51.9px;width:2px;height:24.5px;background:#2626A0;"></div>
<div class="a" style="left:579.7px;top:74.35px;width:217.3px;height:2px;background:#2626A0;"></div>
<div class="a" style="left:795px;top:74.35px;width:2px;height:24.5px;background:#2626A0;"></div>
<div class="a" style="left:725px;top:96.8px;width:72px;height:2px;background:#2626A0;"></div>
<div class="a" style="left:725px;top:96.8px;width:2px;height:24.5px;background:#2626A0;"></div>
<div class="a" style="left:660.5px;top:119.25px;width:66.5px;height:2px;background:#2626A0;"></div>
<div class="a" style="left:660.5px;top:119.25px;width:2px;height:24.5px;background:#2626A0;"></div>
<div class="a" style="left:595px;top:141.7px;width:67.5px;height:2px;background:#2626A0;"></div>
<div class="a" style="left:595px;top:141.7px;width:2px;height:24.5px;background:#2626A0;"></div>
<div class="a" style="left:595px;top:164.15px;width:22px;height:2px;background:#2626A0;"></div>
<div class="a" style="left:615px;top:164.15px;width:2px;height:24.5px;background:#2626A0;"></div>
<div class="a" style="left:542.3px;top:186.6px;width:74.7px;height:2px;background:#2626A0;"></div>
<div class="a" style="left:542.3px;top:186.6px;width:2px;height:24.5px;background:#2626A0;"></div>
<div class="a" style="left:542.3px;top:209.05px;width:49.2px;height:2px;background:#2626A0;"></div>
<div class="a" style="left:589.5px;top:209.05px;width:2px;height:24.5px;background:#2626A0;"></div>
<div class="a" style="left:566.5px;top:231.5px;width:25.0px;height:2px;background:#2626A0;"></div>
<div class="a" style="left:566.5px;top:231.5px;width:2px;height:24.5px;background:#2626A0;"></div>
<div class="a" style="left:566.5px;top:253.95px;width:16.1px;height:2px;background:#2626A0;"></div>
<div class="a" style="left:580.6px;top:253.95px;width:2px;height:24.5px;background:#2626A0;"></div>
<div class="a" style="left:572px;top:276.4px;width:10.6px;height:2px;background:#2626A0;"></div>
<div class="a" style="left:572px;top:276.4px;width:2px;height:24.5px;background:#2626A0;"></div>
<div class="a" style="left:572px;top:298.85px;width:15.6px;height:2px;background:#2626A0;"></div>
<div class="a" style="left:585.6px;top:298.85px;width:2px;height:24.5px;background:#2626A0;"></div>
<div class="a" style="left:585.6px;top:321.3px;width:4.6px;height:2px;background:#2626A0;"></div>
<div class="a" style="left:588.2px;top:321.3px;width:2px;height:24.5px;background:#2626A0;"></div>
<div class="a" style="left:564.1px;top:343.75px;width:26.1px;height:2px;background:#2626A0;"></div>
<div class="a" style="left:564.1px;top:343.75px;width:2px;height:24.5px;background:#2626A0;"></div>
<div class="a" style="left:471.3px;top:366.2px;width:94.8px;height:2px;background:#2626A0;"></div>
<div class="a" style="left:471.3px;top:366.2px;width:2px;height:24.5px;background:#2626A0;"></div>
<div class="a" style="left:471.3px;top:388.65px;width:102.2px;height:2px;background:#2626A0;"></div>
<div class="a" style="left:571.5px;top:388.65px;width:2px;height:24.5px;background:#2626A0;"></div>
<div class="a" style="left:571.5px;top:411.1px;width:67.2px;height:2px;background:#2626A0;"></div>
<div class="a" style="left:636.7px;top:411.1px;width:2px;height:24.5px;background:#2626A0;"></div>
<div class="t" style="left:54.98px;top:-11.64px;font-size:18px;color:#2A2A2A;transform:scale(1.0000,1.1000);transform-origin:0 15.24px;">20</div>
<div class="t" style="left:100.39999999999998px;top:-11.64px;font-size:18px;transform-origin:0 15.24px;transform:scale(1.0113,1.1)"><span style="color:#0000FF">&lt;</span><span style="color:#33337A;font-weight:bold">card</span><span style="color:#800080"> name</span><span style="color:#0000FF">=</span><span style="color:#FF0000">"RINGWARDEN_OWL_386101"</span><span style="color:#800080"> id</span><span style="color:#0000FF">=</span><span style="color:#FF0000">"404"</span><span style="color:#0000FF"> /&gt;</span></div>
<div class="t" style="left:54.98px;top:10.86px;font-size:18px;color:#2A2A2A;transform:scale(1.0000,1.1000);transform-origin:0 15.24px;">21</div>
<div class="t" style="left:100.39999999999998px;top:10.86px;font-size:18px;transform-origin:0 15.24px;transform:scale(1.0007,1.1)"><span style="color:#0000FF">&lt;</span><span style="color:#33337A;font-weight:bold">card</span><span style="color:#800080"> name</span><span style="color:#0000FF">=</span><span style="color:#FF0000">"STALWART_AVEN_398624"</span><span style="color:#800080"> id</span><span style="color:#0000FF">=</span><span style="color:#FF0000">"405"</span><span style="color:#0000FF"> /&gt;</span></div>
<div class="t" style="left:54.98px;top:33.36px;font-size:18px;color:#2A2A2A;transform:scale(1.0000,1.1000);transform-origin:0 15.24px;">22</div>
<div class="t" style="left:100.39999999999998px;top:33.36px;font-size:18px;transform-origin:0 15.24px;transform:scale(1.0068,1.1)"><span style="color:#0000FF">&lt;</span><span style="color:#33337A;font-weight:bold">card</span><span style="color:#800080"> name</span><span style="color:#0000FF">=</span><span style="color:#FF0000">"STOKE_THE_FLAMES_383404"</span><span style="color:#800080"> id</span><span style="color:#0000FF">=</span><span style="color:#FF0000">"406"</span><span style="color:#0000FF"> /&gt;</span></div>
<div class="t" style="left:54.98px;top:55.86px;font-size:18px;color:#2A2A2A;transform:scale(1.0000,1.1000);transform-origin:0 15.24px;">23</div>
<div class="t" style="left:100.39999999999998px;top:55.86px;font-size:18px;transform-origin:0 15.24px;transform:scale(1.0046,1.1)"><span style="color:#0000FF">&lt;</span><span style="color:#33337A;font-weight:bold">card</span><span style="color:#800080"> name</span><span style="color:#0000FF">=</span><span style="color:#FF0000">"SWIFTWATER_CLIFFS_386689"</span><span style="color:#800080"> id</span><span style="color:#0000FF">=</span><span style="color:#FF0000">"407"</span><span style="color:#0000FF"> /&gt;</span></div>
<div class="t" style="left:54.98px;top:78.36px;font-size:18px;color:#2A2A2A;transform:scale(1.0000,1.1000);transform-origin:0 15.24px;">24</div>
<div class="t" style="left:100.39999999999998px;top:78.36px;font-size:18px;transform-origin:0 15.24px;transform:scale(1.0049,1.1)"><span style="color:#0000FF">&lt;</span><span style="color:#33337A;font-weight:bold">card</span><span style="color:#800080"> name</span><span style="color:#0000FF">=</span><span style="color:#FF0000">"TEJAHN_FRF_SOULFIRE_GRAND_MASTER_100391927"</span><span style="color:#800080"> id</span><span style="color:#0000FF">=</span><span style="color:#FF0000">"408"</span><span style="color:#0000FF"> /&gt;</span></div>
<div class="t" style="left:54.98px;top:100.86px;font-size:18px;color:#2A2A2A;transform:scale(1.0000,1.1000);transform-origin:0 15.24px;">25</div>
<div class="t" style="left:100.39999999999998px;top:100.86px;font-size:18px;transform-origin:0 15.24px;transform:scale(1.0050,1.1)"><span style="color:#0000FF">&lt;</span><span style="color:#33337A;font-weight:bold">card</span><span style="color:#800080"> name</span><span style="color:#0000FF">=</span><span style="color:#FF0000">"TEJAHN_FRF_VALOROUS_STANCE_100391950"</span><span style="color:#800080"> id</span><span style="color:#0000FF">=</span><span style="color:#FF0000">"409"</span><span style="color:#0000FF"> /&gt;</span></div>
<div class="t" style="left:54.98px;top:123.36px;font-size:18px;color:#2A2A2A;transform:scale(1.0000,1.1000);transform-origin:0 15.24px;">26</div>
<div class="t" style="left:100.39999999999998px;top:123.36px;font-size:18px;transform-origin:0 15.24px;transform:scale(1.0054,1.1)"><span style="color:#0000FF">&lt;</span><span style="color:#33337A;font-weight:bold">card</span><span style="color:#800080"> name</span><span style="color:#0000FF">=</span><span style="color:#FF0000">"TEMPLE_OF_ENLIGHTENMENT_378535"</span><span style="color:#800080"> id</span><span style="color:#0000FF">=</span><span style="color:#FF0000">"410"</span><span style="color:#0000FF"> /&gt;</span></div>
<div class="t" style="left:54.98px;top:145.86px;font-size:18px;color:#2A2A2A;transform:scale(1.0000,1.1000);transform-origin:0 15.24px;">27</div>
<div class="t" style="left:100.39999999999998px;top:145.86px;font-size:18px;transform-origin:0 15.24px;transform:scale(1.0037,1.1)"><span style="color:#0000FF">&lt;</span><span style="color:#33337A;font-weight:bold">card</span><span style="color:#800080"> name</span><span style="color:#0000FF">=</span><span style="color:#FF0000">"TEMPLE_OF_EPIPHANY_380514"</span><span style="color:#800080"> id</span><span style="color:#0000FF">=</span><span style="color:#FF0000">"411"</span><span style="color:#0000FF"> /&gt;</span></div>
<div class="t" style="left:54.98px;top:168.36px;font-size:18px;color:#2A2A2A;transform:scale(1.0000,1.1000);transform-origin:0 15.24px;">28</div>
<div class="t" style="left:100.39999999999998px;top:168.36px;font-size:18px;transform-origin:0 15.24px;transform:scale(1.0088,1.1)"><span style="color:#0000FF">&lt;</span><span style="color:#33337A;font-weight:bold">card</span><span style="color:#800080"> name</span><span style="color:#0000FF">=</span><span style="color:#FF0000">"THUNDERCLAP_WYVERN_398655"</span><span style="color:#800080"> id</span><span style="color:#0000FF">=</span><span style="color:#FF0000">"412"</span><span style="color:#0000FF"> /&gt;</span></div>
<div class="t" style="left:54.98px;top:190.86px;font-size:18px;color:#2A2A2A;transform:scale(1.0000,1.1000);transform-origin:0 15.24px;">29</div>
<div class="t" style="left:100.39999999999998px;top:190.86px;font-size:18px;transform-origin:0 15.24px;transform:scale(1.0087,1.1)"><span style="color:#0000FF">&lt;</span><span style="color:#33337A;font-weight:bold">card</span><span style="color:#800080"> name</span><span style="color:#0000FF">=</span><span style="color:#FF0000">"TRANQUIL_COVE_386703"</span><span style="color:#800080"> id</span><span style="color:#0000FF">=</span><span style="color:#FF0000">"413"</span><span style="color:#0000FF"> /&gt;</span></div>
<div class="t" style="left:54.98px;top:213.36px;font-size:18px;color:#2A2A2A;transform:scale(1.0000,1.1000);transform-origin:0 15.24px;">30</div>
<div class="t" style="left:100.39999999999998px;top:213.36px;font-size:18px;transform-origin:0 15.24px;transform:scale(1.0104,1.1)"><span style="color:#0000FF">&lt;</span><span style="color:#33337A;font-weight:bold">card</span><span style="color:#800080"> name</span><span style="color:#0000FF">=</span><span style="color:#FF0000">"WINDSCARRED_CRAG_386723"</span><span style="color:#800080"> id</span><span style="color:#0000FF">=</span><span style="color:#FF0000">"414"</span><span style="color:#0000FF"> /&gt;</span></div>
<div class="t" style="left:54.98px;top:235.86px;font-size:18px;color:#2A2A2A;transform:scale(1.0000,1.1000);transform-origin:0 15.24px;">31</div>
<div class="t" style="left:100.39999999999998px;top:235.86px;font-size:18px;transform-origin:0 15.24px;transform:scale(1.0093,1.1)"><span style="color:#0000FF">&lt;</span><span style="color:#33337A;font-weight:bold">card</span><span style="color:#800080"> name</span><span style="color:#0000FF">=</span><span style="color:#FF0000">"BLOODFELL_CAVES_391802"</span><span style="color:#800080"> id</span><span style="color:#0000FF">=</span><span style="color:#FF0000">"415"</span><span style="color:#0000FF"> /&gt;</span></div>
<div class="t" style="left:54.98px;top:258.36px;font-size:18px;color:#2A2A2A;transform:scale(1.0000,1.1000);transform-origin:0 15.24px;">32</div>
<div class="t" style="left:100.39999999999998px;top:258.36px;font-size:18px;transform-origin:0 15.24px;transform:scale(1.0150,1.1)"><span style="color:#0000FF">&lt;</span><span style="color:#33337A;font-weight:bold">card</span><span style="color:#800080"> name</span><span style="color:#0000FF">=</span><span style="color:#FF0000">"SCOURED_BARRENS_386655"</span><span style="color:#800080"> id</span><span style="color:#0000FF">=</span><span style="color:#FF0000">"416"</span><span style="color:#0000FF"> /&gt;</span></div>
<div class="t" style="left:54.98px;top:280.86px;font-size:18px;color:#2A2A2A;transform:scale(1.0000,1.1000);transform-origin:0 15.24px;">33</div>
<div class="t" style="left:100.39999999999998px;top:280.86px;font-size:18px;transform-origin:0 15.24px;transform:scale(1.0032,1.1)"><span style="color:#0000FF">&lt;</span><span style="color:#33337A;font-weight:bold">card</span><span style="color:#800080"> name</span><span style="color:#0000FF">=</span><span style="color:#FF0000">"TEMPLE_OF_MALICE_378536"</span><span style="color:#800080"> id</span><span style="color:#0000FF">=</span><span style="color:#FF0000">"417"</span><span style="color:#0000FF"> /&gt;</span></div>
<div class="t" style="left:54.98px;top:303.36px;font-size:18px;color:#2A2A2A;transform:scale(1.0000,1.1000);transform-origin:0 15.24px;">34</div>
<div class="t" style="left:100.39999999999998px;top:303.36px;font-size:18px;transform-origin:0 15.24px;transform:scale(1.0104,1.1)"><span style="color:#0000FF">&lt;</span><span style="color:#33337A;font-weight:bold">card</span><span style="color:#800080"> name</span><span style="color:#0000FF">=</span><span style="color:#FF0000">"TEMPLE_OF_SILENCE_373522"</span><span style="color:#800080"> id</span><span style="color:#0000FF">=</span><span style="color:#FF0000">"418"</span><span style="color:#0000FF"> /&gt;</span></div>
<div class="t" style="left:54.98px;top:325.86px;font-size:18px;color:#2A2A2A;transform:scale(1.0000,1.1000);transform-origin:0 15.24px;">35</div>
<div class="t" style="left:100.39999999999998px;top:325.86px;font-size:18px;transform-origin:0 15.24px;transform:scale(1.0056,1.1)"><span style="color:#0000FF">&lt;</span><span style="color:#33337A;font-weight:bold">card</span><span style="color:#800080"> name</span><span style="color:#0000FF">=</span><span style="color:#FF0000">"TEMPLE_OF_TRIUMPH_373560"</span><span style="color:#800080"> id</span><span style="color:#0000FF">=</span><span style="color:#FF0000">"419"</span><span style="color:#0000FF"> /&gt;</span></div>
<div class="t" style="left:54.98px;top:348.36px;font-size:18px;color:#2A2A2A;transform:scale(1.0000,1.1000);transform-origin:0 15.24px;">36</div>
<div class="t" style="left:100.39999999999998px;top:348.36px;font-size:18px;transform-origin:0 15.24px;transform:scale(1.0129,1.1)"><span style="color:#0000FF">&lt;</span><span style="color:#33337A;font-weight:bold">card</span><span style="color:#800080"> name</span><span style="color:#0000FF">=</span><span style="color:#FF0000">"CRYPT_INCURSION_369056"</span><span style="color:#800080"> id</span><span style="color:#0000FF">=</span><span style="color:#FF0000">"420"</span><span style="color:#0000FF"> /&gt;</span></div>
<div class="t" style="left:54.98px;top:370.86px;font-size:18px;color:#2A2A2A;transform:scale(1.0000,1.1000);transform-origin:0 15.24px;">37</div>
<div class="t" style="left:100.39999999999998px;top:370.86px;font-size:18px;transform-origin:0 15.24px;transform:scale(1.0159,1.1)"><span style="color:#0000FF">&lt;</span><span style="color:#33337A;font-weight:bold">card</span><span style="color:#800080"> name</span><span style="color:#0000FF">=</span><span style="color:#FF0000">"MURDER_374323"</span><span style="color:#800080"> id</span><span style="color:#0000FF">=</span><span style="color:#FF0000">"421"</span><span style="color:#0000FF"> /&gt;</span></div>
<div class="t" style="left:54.98px;top:393.36px;font-size:18px;color:#2A2A2A;transform:scale(1.0000,1.1000);transform-origin:0 15.24px;">38</div>
<div class="t" style="left:100.39999999999998px;top:393.36px;font-size:18px;transform-origin:0 15.24px;transform:scale(1.0043,1.1)"><span style="color:#0000FF">&lt;</span><span style="color:#33337A;font-weight:bold">card</span><span style="color:#800080"> name</span><span style="color:#0000FF">=</span><span style="color:#FF0000">"BLASPHEMOUS_ACT_628542"</span><span style="color:#800080"> id</span><span style="color:#0000FF">=</span><span style="color:#FF0000">"422"</span><span style="color:#0000FF"> /&gt;</span></div>
</div>
<div class="a" style="left:1895px;top:102px;width:23px;height:418px;background:#F0F0F0;"></div>
<div class="a" style="left:1895px;top:173px;width:22px;height:42px;background:#CDCDCD;"></div>
<svg style="left:1898.1px;top:108.5px" width="15" height="15" viewBox="0 0 15 15"><path d="M2.5 10 L7.5 4.8 L12.5 10" fill="none" stroke="#606060" stroke-width="2.8" stroke-linejoin="miter"/></svg>
<svg style="left:1898.5px;top:499.7px" width="15" height="15" viewBox="0 0 15 15"><path d="M2.5 5 L7.5 10.2 L12.5 5" fill="none" stroke="#606060" stroke-width="2.8" stroke-linejoin="miter"/></svg>
<div class="a" style="left:499px;top:520px;width:1396px;height:24px;background:#F0F0F0;"></div>
<div class="a" style="left:525px;top:521px;width:1061px;height:22px;background:#CDCDCD;"></div>
<svg style="left:504.0px;top:524.8px" width="15" height="15" viewBox="0 0 15 15"><path d="M10 2.5 L4.8 7.5 L10 12.5" fill="none" stroke="#606060" stroke-width="2.8" stroke-linejoin="miter"/></svg>
<svg style="left:1873.2px;top:524.9px" width="15" height="15" viewBox="0 0 15 15"><path d="M5 2.5 L10.2 7.5 L5 12.5" fill="none" stroke="#606060" stroke-width="2.8" stroke-linejoin="miter"/></svg>
<div class="a" style="left:1895px;top:520px;width:23px;height:24px;background:#F0F0F0;"></div>
<div class="a" style="left:498px;top:545px;width:1422px;height:1px;background:#F8F8F8;"></div>
<div class="a" style="left:0px;top:553px;width:491px;height:1px;background:#A0A0A0;"></div>
<div class="a" style="left:0px;top:553px;width:2px;height:436px;background:#A0A0A0;"></div>
<div class="a" style="left:1px;top:554px;width:490px;height:1px;background:#FFFFFF;"></div>
<div class="a" style="left:1px;top:555px;width:488px;height:26px;background:#F0F0F0;"></div>
<div class="a" style="left:489px;top:554px;width:1px;height:27px;background:#A0A0A0;"></div>
<div class="a" style="left:1px;top:581px;width:490px;height:408px;background:#FFFFFF;"></div>
<div class="t" style="left:8.80px;top:560.12px;font-size:19px;color:#111;transform:scale(0.9736,1.0000);transform-origin:0 16.08px;">Table Selection Browser</div>
<div class="a" style="left:467px;top:559px;width:18px;height:18px;background:#F0F0F0;border-top:1px solid #FFFFFF;border-left:1px solid #FFFFFF;border-right:2px solid #808080;border-bottom:2px solid #808080"></div>
<div class="t" style="left:470.50px;top:559.11px;font-size:17px;color:#111;font-weight:bold;">x</div>
<div class="t" style="left:9.20px;top:590.02px;font-size:19px;color:#A8A8A8;transform:scale(0.9757,1.0000);transform-origin:0 16.08px;">This Tree Selection Browser is empty</div>
<div class="a" style="left:498px;top:553px;width:1422px;height:1px;background:#A0A0A0;"></div>
<div class="a" style="left:498px;top:553px;width:1px;height:436px;background:#A0A0A0;"></div>
<div class="a" style="left:499px;top:554px;width:1419px;height:1px;background:#FFFFFF;"></div>
<div class="a" style="left:499px;top:555px;width:1418px;height:26px;background:#F0F0F0;"></div>
<div class="a" style="left:1917px;top:553px;width:1px;height:28px;background:#A0A0A0;"></div>
<div class="a" style="left:499px;top:581px;width:1395px;height:408px;background:#FFFFFF;"></div>
<div class="t" style="left:507.00px;top:560.02px;font-size:19px;color:#111;transform:scale(0.9774,1.0000);transform-origin:0 16.08px;">Tree Selection Browser</div>
<div class="a" style="left:1894px;top:581px;width:24px;height:407px;background:#F0F0F0;"></div>
<div class="a" style="left:1895px;top:930px;width:22px;height:32px;background:#CDCDCD;"></div>
<svg style="left:1898.1px;top:586.5px" width="15" height="15" viewBox="0 0 15 15"><path d="M2.5 10 L7.5 4.8 L12.5 10" fill="none" stroke="#606060" stroke-width="2.8" stroke-linejoin="miter"/></svg>
<svg style="left:1897.9px;top:967.7px" width="15" height="15" viewBox="0 0 15 15"><path d="M2.5 5 L7.5 10.2 L12.5 5" fill="none" stroke="#606060" stroke-width="2.8" stroke-linejoin="miter"/></svg>
<div class="a" style="left:509px;top:620px;width:36px;height:366px;background:#A9C4DC;"></div>
<div class="a" style="left:547px;top:620px;width:132px;height:366px;background:#EEEEFC;"></div>
<div class="a" style="left:681px;top:620px;width:559px;height:366px;background:#FFFFFF;"></div>
<div class="a" style="left:509px;top:626px;width:731px;height:1px;background:#808080;"></div>
<div class="a" style="left:549px;top:622px;width:24px;height:2px;background:#2020FF;"></div>
<div class="a" style="left:509px;top:656px;width:731px;height:1px;background:#808080;"></div>
<div class="t" style="left:512.00px;top:630.66px;font-size:18px;color:#111;font-weight:bold;transform:scale(1.0322,1.1000);transform-origin:0 15.24px;">134</div>
<svg style="left:548.80px;top:630.60px" width="24" height="20" viewBox="0 0 24 20"><path d="M0.6 11 L6.5 4.5 H15.8 L21.8 11 L15.8 17.5 H6.5 Z" fill="#FFFF66"/><path d="M10 17.5 L15.5 11.5 L19 7.7 L21.8 11 L15.8 17.5 Z" fill="#FFC040" opacity="0.55"/><path d="M6.8 4.3 L0.8 11 L6.8 17.7 M15.5 4.3 L21.5 11 L15.5 17.7" fill="none" stroke="#1A1A1A" stroke-width="1.5"/><path d="M17.5 2.1 H23.5 M17.5 5.1 H23.5" stroke="#111" stroke-width="1.4"/></svg>
<div class="a" style="left:549px;top:653px;width:24px;height:2px;background:#2020FF;"></div>
<div class="t" style="left:582.20px;top:630.66px;font-size:18px;color:#111;transform:scale(1.0000,1.1000);transform-origin:0 15.24px;">card</div>
<div class="t" style="left:683.40px;top:630.66px;font-size:18px;color:#111;transform:scale(0.9950,1.1000);transform-origin:0 15.24px;">IMMORTAL_SERVITUDE_17366247</div>
<div class="t" style="left:1169.60px;top:630.66px;font-size:18px;color:#111;transform:scale(1.0000,1.1000);transform-origin:0 15.24px;">519</div>
<div class="a" style="left:509px;top:686px;width:731px;height:1px;background:#808080;"></div>
<div class="t" style="left:512.00px;top:660.66px;font-size:18px;color:#111;font-weight:bold;transform:scale(1.0322,1.1000);transform-origin:0 15.24px;">135</div>
<svg style="left:548.80px;top:660.60px" width="24" height="20" viewBox="0 0 24 20"><path d="M0.6 11 L6.5 4.5 H15.8 L21.8 11 L15.8 17.5 H6.5 Z" fill="#FFFF66"/><path d="M10 17.5 L15.5 11.5 L19 7.7 L21.8 11 L15.8 17.5 Z" fill="#FFC040" opacity="0.55"/><path d="M6.8 4.3 L0.8 11 L6.8 17.7 M15.5 4.3 L21.5 11 L15.5 17.7" fill="none" stroke="#1A1A1A" stroke-width="1.5"/><path d="M17.5 2.1 H23.5 M17.5 5.1 H23.5" stroke="#111" stroke-width="1.4"/></svg>
<div class="a" style="left:549px;top:683px;width:24px;height:2px;background:#2020FF;"></div>
<div class="t" style="left:582.20px;top:660.66px;font-size:18px;color:#111;transform:scale(1.0000,1.1000);transform-origin:0 15.24px;">card</div>
<div class="t" style="left:683.40px;top:660.66px;font-size:18px;color:#111;transform:scale(1.0153,1.1000);transform-origin:0 15.24px;">JOU_042_NEO_HYPNOTIC_SIREN_995380439</div>
<div class="t" style="left:1169.60px;top:660.66px;font-size:18px;color:#111;transform:scale(1.0000,1.1000);transform-origin:0 15.24px;">520</div>
<div class="a" style="left:509px;top:716px;width:731px;height:1px;background:#808080;"></div>
<div class="t" style="left:512.00px;top:690.66px;font-size:18px;color:#111;font-weight:bold;transform:scale(1.0322,1.1000);transform-origin:0 15.24px;">136</div>
<svg style="left:548.80px;top:690.60px" width="24" height="20" viewBox="0 0 24 20"><path d="M0.6 11 L6.5 4.5 H15.8 L21.8 11 L15.8 17.5 H6.5 Z" fill="#FFFF66"/><path d="M10 17.5 L15.5 11.5 L19 7.7 L21.8 11 L15.8 17.5 Z" fill="#FFC040" opacity="0.55"/><path d="M6.8 4.3 L0.8 11 L6.8 17.7 M15.5 4.3 L21.5 11 L15.5 17.7" fill="none" stroke="#1A1A1A" stroke-width="1.5"/><path d="M17.5 2.1 H23.5 M17.5 5.1 H23.5" stroke="#111" stroke-width="1.4"/></svg>
<div class="a" style="left:549px;top:713px;width:24px;height:2px;background:#2020FF;"></div>
<div class="t" style="left:582.20px;top:690.66px;font-size:18px;color:#111;transform:scale(1.0000,1.1000);transform-origin:0 15.24px;">card</div>
<div class="t" style="left:683.40px;top:690.66px;font-size:18px;color:#111;transform:scale(1.0126,1.1000);transform-origin:0 15.24px;">OB_NIXILIS_UNSHACKLED_199383330</div>
<div class="t" style="left:1169.60px;top:690.66px;font-size:18px;color:#111;transform:scale(1.0000,1.1000);transform-origin:0 15.24px;">521</div>
<div class="a" style="left:681px;top:716px;width:559px;height:30px;background:#808000;"></div>
<div class="a" style="left:681px;top:718px;width:559px;height:28px;background:#FF9F3F;"></div>
<div class="a" style="left:680px;top:716px;width:1px;height:30px;background:#402000;"></div>
<div class="a" style="left:509px;top:746px;width:731px;height:1px;background:#808080;"></div>
<div class="a" style="left:681px;top:746px;width:559px;height:1px;background:#808080;"></div>
<div class="t" style="left:512.00px;top:720.66px;font-size:18px;color:#111;font-weight:bold;transform:scale(1.0322,1.1000);transform-origin:0 15.24px;">137</div>
<svg style="left:548.80px;top:720.60px" width="24" height="20" viewBox="0 0 24 20"><path d="M0.6 11 L6.5 4.5 H15.8 L21.8 11 L15.8 17.5 H6.5 Z" fill="#FFFF66"/><path d="M10 17.5 L15.5 11.5 L19 7.7 L21.8 11 L15.8 17.5 Z" fill="#FFC040" opacity="0.55"/><path d="M6.8 4.3 L0.8 11 L6.8 17.7 M15.5 4.3 L21.5 11 L15.5 17.7" fill="none" stroke="#1A1A1A" stroke-width="1.5"/><path d="M17.5 2.1 H23.5 M17.5 5.1 H23.5" stroke="#111" stroke-width="1.4"/></svg>
<div class="a" style="left:549px;top:743px;width:24px;height:2px;background:#2020FF;"></div>
<div class="t" style="left:582.20px;top:720.66px;font-size:18px;color:#111;transform:scale(1.0000,1.1000);transform-origin:0 15.24px;">card</div>
<div class="t" style="left:683.40px;top:720.66px;font-size:18px;color:#111;transform:scale(1.0000,1.1000);transform-origin:0 15.24px;">SHADOWBORN_APOSTLE_338111</div>
<div class="t" style="left:1169.60px;top:720.66px;font-size:18px;color:#111;transform:scale(1.0000,1.1000);transform-origin:0 15.24px;">522</div>
<div class="a" style="left:509px;top:776px;width:731px;height:1px;background:#808080;"></div>
<div class="t" style="left:512.00px;top:750.66px;font-size:18px;color:#111;font-weight:bold;transform:scale(1.0322,1.1000);transform-origin:0 15.24px;">138</div>
<svg style="left:548.80px;top:750.60px" width="24" height="20" viewBox="0 0 24 20"><path d="M0.6 11 L6.5 4.5 H15.8 L21.8 11 L15.8 17.5 H6.5 Z" fill="#FFFF66"/><path d="M10 17.5 L15.5 11.5 L19 7.7 L21.8 11 L15.8 17.5 Z" fill="#FFC040" opacity="0.55"/><path d="M6.8 4.3 L0.8 11 L6.8 17.7 M15.5 4.3 L21.5 11 L15.5 17.7" fill="none" stroke="#1A1A1A" stroke-width="1.5"/><path d="M17.5 2.1 H23.5 M17.5 5.1 H23.5" stroke="#111" stroke-width="1.4"/></svg>
<div class="a" style="left:549px;top:773px;width:24px;height:2px;background:#2020FF;"></div>
<div class="t" style="left:582.20px;top:750.66px;font-size:18px;color:#111;transform:scale(1.0000,1.1000);transform-origin:0 15.24px;">card</div>
<div class="t" style="left:683.40px;top:750.66px;font-size:18px;color:#111;transform:scale(1.0040,1.1000);transform-origin:0 15.24px;">THS_223_NEO_NYKTHOS_SHRINE_TO_NYX_9993737...</div>
<div class="t" style="left:1169.60px;top:750.66px;font-size:18px;color:#111;transform:scale(1.0000,1.1000);transform-origin:0 15.24px;">523</div>
<div class="a" style="left:509px;top:806px;width:731px;height:1px;background:#808080;"></div>
<div class="t" style="left:512.00px;top:780.66px;font-size:18px;color:#111;font-weight:bold;transform:scale(1.0322,1.1000);transform-origin:0 15.24px;">139</div>
<svg style="left:548.80px;top:780.60px" width="24" height="20" viewBox="0 0 24 20"><path d="M0.6 11 L6.5 4.5 H15.8 L21.8 11 L15.8 17.5 H6.5 Z" fill="#FFFF66"/><path d="M10 17.5 L15.5 11.5 L19 7.7 L21.8 11 L15.8 17.5 Z" fill="#FFC040" opacity="0.55"/><path d="M6.8 4.3 L0.8 11 L6.8 17.7 M15.5 4.3 L21.5 11 L15.5 17.7" fill="none" stroke="#1A1A1A" stroke-width="1.5"/><path d="M17.5 2.1 H23.5 M17.5 5.1 H23.5" stroke="#111" stroke-width="1.4"/></svg>
<div class="a" style="left:549px;top:803px;width:24px;height:2px;background:#2020FF;"></div>
<div class="t" style="left:582.20px;top:780.66px;font-size:18px;color:#111;transform:scale(1.0000,1.1000);transform-origin:0 15.24px;">card</div>
<div class="t" style="left:683.40px;top:780.66px;font-size:18px;color:#111;transform:scale(1.0199,1.1000);transform-origin:0 15.24px;">UNDERWORLD_CONNECTIONS_253507</div>
<div class="t" style="left:1169.60px;top:780.66px;font-size:18px;color:#111;transform:scale(1.0000,1.1000);transform-origin:0 15.24px;">524</div>
<div class="a" style="left:509px;top:836px;width:731px;height:1px;background:#808080;"></div>
<div class="t" style="left:512.00px;top:810.66px;font-size:18px;color:#111;font-weight:bold;transform:scale(1.0322,1.1000);transform-origin:0 15.24px;">140</div>
<svg style="left:548.80px;top:810.60px" width="24" height="20" viewBox="0 0 24 20"><path d="M0.6 11 L6.5 4.5 H15.8 L21.8 11 L15.8 17.5 H6.5 Z" fill="#FFFF66"/><path d="M10 17.5 L15.5 11.5 L19 7.7 L21.8 11 L15.8 17.5 Z" fill="#FFC040" opacity="0.55"/><path d="M6.8 4.3 L0.8 11 L6.8 17.7 M15.5 4.3 L21.5 11 L15.5 17.7" fill="none" stroke="#1A1A1A" stroke-width="1.5"/><path d="M17.5 2.1 H23.5 M17.5 5.1 H23.5" stroke="#111" stroke-width="1.4"/></svg>
<div class="a" style="left:549px;top:833px;width:24px;height:2px;background:#2020FF;"></div>
<div class="t" style="left:582.20px;top:810.66px;font-size:18px;color:#111;transform:scale(1.0000,1.1000);transform-origin:0 15.24px;">card</div>
<div class="t" style="left:683.40px;top:810.66px;font-size:18px;color:#111;transform:scale(1.0000,1.1000);transform-origin:0 15.24px;">XATHRID_NECROMANCER_627180</div>
<div class="t" style="left:1169.60px;top:810.66px;font-size:18px;color:#111;transform:scale(1.0000,1.1000);transform-origin:0 15.24px;">525</div>
<div class="a" style="left:681px;top:836px;width:559px;height:30px;background:#808000;"></div>
<div class="a" style="left:681px;top:838px;width:559px;height:28px;background:#FF9F3F;"></div>
<div class="a" style="left:680px;top:836px;width:1px;height:30px;background:#402000;"></div>
<div class="a" style="left:509px;top:866px;width:731px;height:1px;background:#808080;"></div>
<div class="a" style="left:681px;top:866px;width:559px;height:1px;background:#808000;"></div>
<div class="t" style="left:512.00px;top:840.66px;font-size:18px;color:#111;font-weight:bold;transform:scale(1.0322,1.1000);transform-origin:0 15.24px;">141</div>
<svg style="left:548.80px;top:840.60px" width="24" height="20" viewBox="0 0 24 20"><path d="M0.6 11 L6.5 4.5 H15.8 L21.8 11 L15.8 17.5 H6.5 Z" fill="#FFFF66"/><path d="M10 17.5 L15.5 11.5 L19 7.7 L21.8 11 L15.8 17.5 Z" fill="#FFC040" opacity="0.55"/><path d="M6.8 4.3 L0.8 11 L6.8 17.7 M15.5 4.3 L21.5 11 L15.5 17.7" fill="none" stroke="#1A1A1A" stroke-width="1.5"/><path d="M17.5 2.1 H23.5 M17.5 5.1 H23.5" stroke="#111" stroke-width="1.4"/></svg>
<div class="a" style="left:549px;top:863px;width:24px;height:2px;background:#2020FF;"></div>
<div class="t" style="left:582.20px;top:840.66px;font-size:18px;color:#111;transform:scale(1.0000,1.1000);transform-origin:0 15.24px;">card</div>
<div class="t" style="left:683.40px;top:840.66px;font-size:18px;color:#111;transform:scale(1.0000,1.1000);transform-origin:0 15.24px;">SHADOWBORN_APOSTLE_338111</div>
<div class="t" style="left:1169.60px;top:840.66px;font-size:18px;color:#111;transform:scale(1.0000,1.1000);transform-origin:0 15.24px;">526</div>
<div class="a" style="left:681px;top:866px;width:559px;height:30px;background:#808000;"></div>
<div class="a" style="left:681px;top:868px;width:559px;height:28px;background:#FF9F3F;"></div>
<div class="a" style="left:680px;top:866px;width:1px;height:30px;background:#402000;"></div>
<div class="a" style="left:509px;top:896px;width:731px;height:1px;background:#808080;"></div>
<div class="a" style="left:681px;top:896px;width:559px;height:1px;background:#808000;"></div>
<div class="t" style="left:512.00px;top:870.66px;font-size:18px;color:#111;font-weight:bold;transform:scale(1.0322,1.1000);transform-origin:0 15.24px;">142</div>
<svg style="left:548.80px;top:870.60px" width="24" height="20" viewBox="0 0 24 20"><path d="M0.6 11 L6.5 4.5 H15.8 L21.8 11 L15.8 17.5 H6.5 Z" fill="#FFFF66"/><path d="M10 17.5 L15.5 11.5 L19 7.7 L21.8 11 L15.8 17.5 Z" fill="#FFC040" opacity="0.55"/><path d="M6.8 4.3 L0.8 11 L6.8 17.7 M15.5 4.3 L21.5 11 L15.5 17.7" fill="none" stroke="#1A1A1A" stroke-width="1.5"/><path d="M17.5 2.1 H23.5 M17.5 5.1 H23.5" stroke="#111" stroke-width="1.4"/></svg>
<div class="a" style="left:549px;top:893px;width:24px;height:2px;background:#2020FF;"></div>
<div class="t" style="left:582.20px;top:870.66px;font-size:18px;color:#111;transform:scale(1.0000,1.1000);transform-origin:0 15.24px;">card</div>
<div class="t" style="left:683.40px;top:870.66px;font-size:18px;color:#111;transform:scale(1.0000,1.1000);transform-origin:0 15.24px;">SHADOWBORN_APOSTLE_338111</div>
<div class="t" style="left:1169.60px;top:870.66px;font-size:18px;color:#111;transform:scale(1.0000,1.1000);transform-origin:0 15.24px;">527</div>
<div class="a" style="left:681px;top:896px;width:559px;height:30px;background:#808000;"></div>
<div class="a" style="left:681px;top:898px;width:559px;height:28px;background:#FF9F3F;"></div>
<div class="a" style="left:680px;top:896px;width:1px;height:30px;background:#402000;"></div>
<div class="a" style="left:509px;top:926px;width:731px;height:1px;background:#808080;"></div>
<div class="a" style="left:681px;top:926px;width:559px;height:1px;background:#808000;"></div>
<div class="t" style="left:512.00px;top:900.66px;font-size:18px;color:#111;font-weight:bold;transform:scale(1.0322,1.1000);transform-origin:0 15.24px;">143</div>
<svg style="left:548.80px;top:900.60px" width="24" height="20" viewBox="0 0 24 20"><path d="M0.6 11 L6.5 4.5 H15.8 L21.8 11 L15.8 17.5 H6.5 Z" fill="#FFFF66"/><path d="M10 17.5 L15.5 11.5 L19 7.7 L21.8 11 L15.8 17.5 Z" fill="#FFC040" opacity="0.55"/><path d="M6.8 4.3 L0.8 11 L6.8 17.7 M15.5 4.3 L21.5 11 L15.5 17.7" fill="none" stroke="#1A1A1A" stroke-width="1.5"/><path d="M17.5 2.1 H23.5 M17.5 5.1 H23.5" stroke="#111" stroke-width="1.4"/></svg>
<div class="a" style="left:549px;top:923px;width:24px;height:2px;background:#2020FF;"></div>
<div class="t" style="left:582.20px;top:900.66px;font-size:18px;color:#111;transform:scale(1.0000,1.1000);transform-origin:0 15.24px;">card</div>
<div class="t" style="left:683.40px;top:900.66px;font-size:18px;color:#111;transform:scale(1.0000,1.1000);transform-origin:0 15.24px;">SHADOWBORN_APOSTLE_338111</div>
<div class="t" style="left:1169.60px;top:900.66px;font-size:18px;color:#111;transform:scale(1.0000,1.1000);transform-origin:0 15.24px;">528</div>
<div class="a" style="left:681px;top:926px;width:559px;height:30px;background:#808000;"></div>
<div class="a" style="left:681px;top:928px;width:559px;height:28px;background:#FF9F3F;"></div>
<div class="a" style="left:680px;top:926px;width:1px;height:30px;background:#402000;"></div>
<div class="a" style="left:509px;top:956px;width:731px;height:1px;background:#808080;"></div>
<div class="a" style="left:681px;top:956px;width:559px;height:1px;background:#808000;"></div>
<div class="t" style="left:512.00px;top:930.66px;font-size:18px;color:#111;font-weight:bold;transform:scale(1.0322,1.1000);transform-origin:0 15.24px;">144</div>
<svg style="left:548.80px;top:930.60px" width="24" height="20" viewBox="0 0 24 20"><path d="M0.6 11 L6.5 4.5 H15.8 L21.8 11 L15.8 17.5 H6.5 Z" fill="#FFFF66"/><path d="M10 17.5 L15.5 11.5 L19 7.7 L21.8 11 L15.8 17.5 Z" fill="#FFC040" opacity="0.55"/><path d="M6.8 4.3 L0.8 11 L6.8 17.7 M15.5 4.3 L21.5 11 L15.5 17.7" fill="none" stroke="#1A1A1A" stroke-width="1.5"/><path d="M17.5 2.1 H23.5 M17.5 5.1 H23.5" stroke="#111" stroke-width="1.4"/></svg>
<div class="a" style="left:549px;top:953px;width:24px;height:2px;background:#2020FF;"></div>
<div class="t" style="left:582.20px;top:930.66px;font-size:18px;color:#111;transform:scale(1.0000,1.1000);transform-origin:0 15.24px;">card</div>
<div class="t" style="left:683.40px;top:930.66px;font-size:18px;color:#111;transform:scale(1.0000,1.1000);transform-origin:0 15.24px;">SHADOWBORN_APOSTLE_338111</div>
<div class="t" style="left:1169.60px;top:930.66px;font-size:18px;color:#111;transform:scale(1.0000,1.1000);transform-origin:0 15.24px;">529</div>
<div class="a" style="left:681px;top:956px;width:559px;height:30px;background:#808000;"></div>
<div class="a" style="left:681px;top:958px;width:559px;height:28px;background:#FF9F3F;"></div>
<div class="a" style="left:680px;top:956px;width:1px;height:30px;background:#402000;"></div>
<div class="a" style="left:509px;top:986px;width:731px;height:1px;background:#808080;"></div>
<div class="a" style="left:681px;top:986px;width:559px;height:1px;background:#808080;"></div>
<div class="t" style="left:512.00px;top:960.66px;font-size:18px;color:#111;font-weight:bold;transform:scale(1.0322,1.1000);transform-origin:0 15.24px;">145</div>
<svg style="left:548.80px;top:960.60px" width="24" height="20" viewBox="0 0 24 20"><path d="M0.6 11 L6.5 4.5 H15.8 L21.8 11 L15.8 17.5 H6.5 Z" fill="#FFFF66"/><path d="M10 17.5 L15.5 11.5 L19 7.7 L21.8 11 L15.8 17.5 Z" fill="#FFC040" opacity="0.55"/><path d="M6.8 4.3 L0.8 11 L6.8 17.7 M15.5 4.3 L21.5 11 L15.5 17.7" fill="none" stroke="#1A1A1A" stroke-width="1.5"/><path d="M17.5 2.1 H23.5 M17.5 5.1 H23.5" stroke="#111" stroke-width="1.4"/></svg>
<div class="a" style="left:549px;top:983px;width:24px;height:2px;background:#2020FF;"></div>
<div class="t" style="left:582.20px;top:960.66px;font-size:18px;color:#111;transform:scale(1.0000,1.1000);transform-origin:0 15.24px;">card</div>
<div class="t" style="left:683.40px;top:960.66px;font-size:18px;color:#111;transform:scale(1.0000,1.1000);transform-origin:0 15.24px;">SHADOWBORN_APOSTLE_338111</div>
<div class="t" style="left:1169.60px;top:960.66px;font-size:18px;color:#111;transform:scale(1.0000,1.1000);transform-origin:0 15.24px;">530</div>
<div class="a" style="left:509px;top:590px;width:731px;height:28px;background:#A9C4DC;"></div>
<div class="a" style="left:1166px;top:590px;width:1px;height:396px;background:#C8C8C8;"></div>
<div class="a" style="left:1166px;top:718px;width:1px;height:28px;background:#D08A48;"></div>
<div class="a" style="left:1166px;top:838px;width:1px;height:28px;background:#D08A48;"></div>
<div class="a" style="left:1166px;top:868px;width:1px;height:28px;background:#D08A48;"></div>
<div class="a" style="left:1166px;top:898px;width:1px;height:28px;background:#D08A48;"></div>
<div class="a" style="left:1166px;top:928px;width:1px;height:28px;background:#D08A48;"></div>
<div class="a" style="left:1166px;top:958px;width:1px;height:28px;background:#D08A48;"></div>
<div class="t" style="left:549.80px;top:593.16px;font-size:18px;color:#111;font-weight:bold;transform:scale(0.9720,1.1000);transform-origin:0 15.24px;">Tag name/Text</div>
<svg style="left:688px;top:595px" width="16" height="16" viewBox="0 0 16 16"><rect x="1" y="1" width="14" height="14" fill="#FF88FF" stroke="#B040E0" stroke-width="1.5"/><path d="M4 6.5 H12 M4 9.5 H12" stroke="#222" stroke-width="1.5"/></svg>
<div class="t" style="left:717.40px;top:593.16px;font-size:18px;color:#111;font-weight:bold;transform:scale(1.0000,1.1000);transform-origin:0 15.24px;">name</div>
<svg style="left:1174px;top:595px" width="16" height="16" viewBox="0 0 16 16"><rect x="1" y="1" width="14" height="14" fill="#FF88FF" stroke="#B040E0" stroke-width="1.5"/><path d="M4 6.5 H12 M4 9.5 H12" stroke="#222" stroke-width="1.5"/></svg>
<div class="t" style="left:1203.00px;top:593.16px;font-size:18px;color:#111;font-weight:bold;transform:scale(1.0000,1.1000);transform-origin:0 15.24px;">id</div>
<div class="a" style="left:507px;top:589px;width:735px;height:2px;background:#24249C;"></div>
<div class="a" style="left:507px;top:589px;width:2px;height:399px;background:#24249C;"></div>
<div class="a" style="left:1240px;top:589px;width:2px;height:399px;background:#24249C;"></div>
<div class="a" style="left:507px;top:986px;width:735px;height:2px;background:#24249C;"></div>
<div class="a" style="left:509px;top:618px;width:731px;height:2px;background:#24249C;"></div>
<div class="a" style="left:509px;top:620px;width:731px;height:1px;background:#707070;"></div>
<div class="a" style="left:545px;top:590px;width:2px;height:396px;background:#24249C;"></div>
<div class="a" style="left:679px;top:590px;width:2px;height:396px;background:#24249C;"></div>
<div class="a" style="left:491px;top:101px;width:1px;height:445px;background:#FAFAFA;"></div>
<div class="a" style="left:0px;top:545px;width:491px;height:1px;background:#FAFAFA;"></div>
</body></html>
